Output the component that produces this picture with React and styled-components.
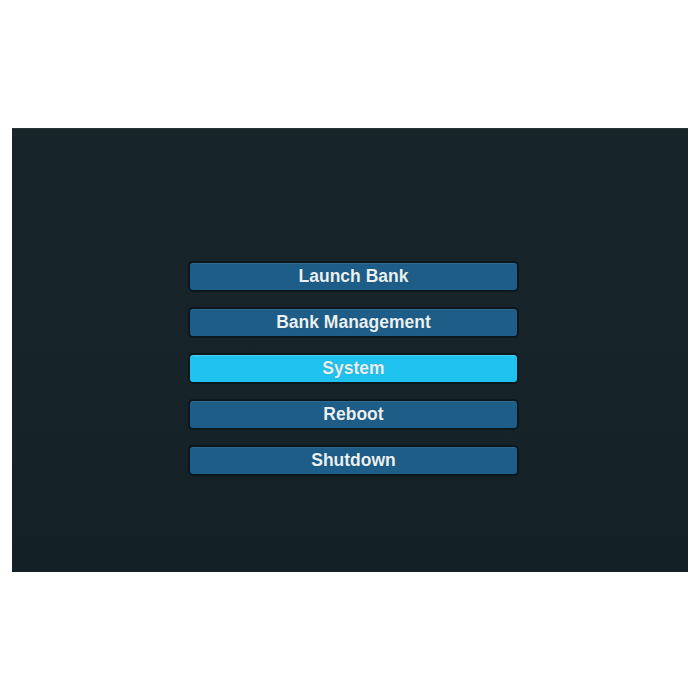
import styled, { createGlobalStyle } from 'styled-components';

const items = ['Launch Bank', 'Bank Management', 'System', 'Reboot', 'Shutdown'];
const selected = 'System';

const GlobalStyle = createGlobalStyle`
  html, body {
    margin: 0;
    padding: 0;
    background: #ffffff;
  }
`;

const Page = styled.div`
  width: 700px;
  height: 700px;
  padding: 128px 12px 0 12px;
  box-sizing: border-box;
  background: #ffffff;
`;

const Screen = styled.div`
  width: 676px;
  height: 444px;
  box-sizing: border-box;
  background: linear-gradient(180deg, #17252a 0%, #16242a 60%, #132126 100%);
  border-top: 1px solid #2a3538;
  padding: 132px 0 0 176px;
`;

const Menu = styled.div`
  display: flex;
  flex-direction: column;
  gap: 15px;
  width: 331px;
`;

const MenuItem = styled.div`
  height: 31px;
  box-sizing: border-box;
  border: 2px solid #0b171c;
  border-radius: 5px;
  background: ${(p) => (p.$active ? '#1fc2ee' : '#1d5d87')};
  box-shadow: inset 0 1px 0 ${(p) => (p.$active ? 'rgba(255,255,255,0.2)' : 'rgba(255,255,255,0.08)')};
  display: flex;
  align-items: center;
  justify-content: center;
  font-family: 'Liberation Sans', Arial, sans-serif;
  font-weight: bold;
  font-size: 17.5px;
  color: #e9f1f5;
  text-shadow: 0 0 1px rgba(0, 0, 0, 0.3);
`;

const App = () => {
  return (
    <>
      <GlobalStyle />
      <Page>
        <Screen>
          <Menu>
            {items.map((item) => (
              <MenuItem key={item} $active={item === selected}>
                {item}
              </MenuItem>
            ))}
          </Menu>
        </Screen>
      </Page>
    </>
  );
};

export default App;
